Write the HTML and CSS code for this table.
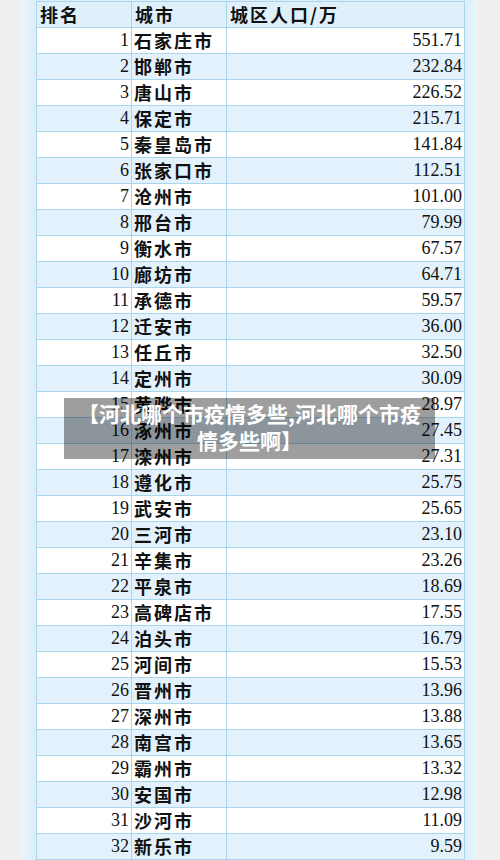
FILE: index.html
```html
<!DOCTYPE html>
<html lang="zh">
<head>
<meta charset="utf-8">
<link rel="stylesheet" href="styles.css">
</head>
<body>
<div class="page">
  <div class="band">
    <table class="pop">
      <colgroup><col class="c1"><col class="c2"><col class="c3"></colgroup>
      <thead>
        <tr><th>排名</th><th>城市</th><th>城区人口/万</th></tr>
      </thead>
      <tbody>
        <tr><td class="rank">1</td><td class="city">石家庄市</td><td class="num">551.71</td></tr>
        <tr><td class="rank">2</td><td class="city">邯郸市</td><td class="num">232.84</td></tr>
        <tr><td class="rank">3</td><td class="city">唐山市</td><td class="num">226.52</td></tr>
        <tr><td class="rank">4</td><td class="city">保定市</td><td class="num">215.71</td></tr>
        <tr><td class="rank">5</td><td class="city">秦皇岛市</td><td class="num">141.84</td></tr>
        <tr><td class="rank">6</td><td class="city">张家口市</td><td class="num">112.51</td></tr>
        <tr><td class="rank">7</td><td class="city">沧州市</td><td class="num">101.00</td></tr>
        <tr><td class="rank">8</td><td class="city">邢台市</td><td class="num">79.99</td></tr>
        <tr><td class="rank">9</td><td class="city">衡水市</td><td class="num">67.57</td></tr>
        <tr><td class="rank">10</td><td class="city">廊坊市</td><td class="num">64.71</td></tr>
        <tr><td class="rank">11</td><td class="city">承德市</td><td class="num">59.57</td></tr>
        <tr><td class="rank">12</td><td class="city">迁安市</td><td class="num">36.00</td></tr>
        <tr><td class="rank">13</td><td class="city">任丘市</td><td class="num">32.50</td></tr>
        <tr><td class="rank">14</td><td class="city">定州市</td><td class="num">30.09</td></tr>
        <tr><td class="rank">15</td><td class="city">黄骅市</td><td class="num">28.97</td></tr>
        <tr><td class="rank">16</td><td class="city">涿州市</td><td class="num">27.45</td></tr>
        <tr><td class="rank">17</td><td class="city">滦州市</td><td class="num">27.31</td></tr>
        <tr><td class="rank">18</td><td class="city">遵化市</td><td class="num">25.75</td></tr>
        <tr><td class="rank">19</td><td class="city">武安市</td><td class="num">25.65</td></tr>
        <tr><td class="rank">20</td><td class="city">三河市</td><td class="num">23.10</td></tr>
        <tr><td class="rank">21</td><td class="city">辛集市</td><td class="num">23.26</td></tr>
        <tr><td class="rank">22</td><td class="city">平泉市</td><td class="num">18.69</td></tr>
        <tr><td class="rank">23</td><td class="city">高碑店市</td><td class="num">17.55</td></tr>
        <tr><td class="rank">24</td><td class="city">泊头市</td><td class="num">16.79</td></tr>
        <tr><td class="rank">25</td><td class="city">河间市</td><td class="num">15.53</td></tr>
        <tr><td class="rank">26</td><td class="city">晋州市</td><td class="num">13.96</td></tr>
        <tr><td class="rank">27</td><td class="city">深州市</td><td class="num">13.88</td></tr>
        <tr><td class="rank">28</td><td class="city">南宫市</td><td class="num">13.65</td></tr>
        <tr><td class="rank">29</td><td class="city">霸州市</td><td class="num">13.32</td></tr>
        <tr><td class="rank">30</td><td class="city">安国市</td><td class="num">12.98</td></tr>
        <tr><td class="rank">31</td><td class="city">沙河市</td><td class="num">11.09</td></tr>
        <tr><td class="rank">32</td><td class="city">新乐市</td><td class="num">9.59</td></tr>
      </tbody>
    </table>
  </div>
  <div class="caption">【河北哪个市疫情多些,河北哪个市疫情多些啊】</div>
</div>
</body>
</html>
```
FILE: styles.css
```css
html, body {
  margin: 0;
  padding: 0;
}
body {
  background: #efefef;
  width: 500px;
  height: 860px;
  overflow: hidden;
}
.page {
  position: relative;
  width: 500px;
  height: 860px;
}
.band {
  margin: 0 22px;
  padding: 1px 14px 0 14px;
  background: linear-gradient(to right, #eaf5fc 0, #dcedf9 14px, #dcedf9 442px, #eaf5fc 456px);
  height: 859px;
}
.pop {
  border-collapse: collapse;
  table-layout: fixed;
  width: 428px;
  color: #111;
}
.c1 { width: 95px; }
.c2 { width: 95px; }
.c3 { width: 238px; }
.pop th, .pop td {
  border: 1px solid #a9d6ec;
  height: 25px;
  padding: 0 2px;
  line-height: 25px;
  white-space: nowrap;
  overflow: hidden;
}
.pop th {
  background: #dff0fb;
  text-align: left;
  font-family: "Noto Sans CJK SC", sans-serif;
  font-weight: 700;
  font-size: 18px;
  letter-spacing: 2px;
  padding-left: 3px;
}
.pop tbody tr:nth-child(odd) td { background: #ffffff; }
.pop tbody tr:nth-child(even) td { background: #e3f1fc; }
.rank, .num {
  text-align: right;
  font-family: "Liberation Serif", serif;
  font-size: 18px;
}
.rank { padding-right: 1px; }
.city {
  font-family: "Noto Sans CJK SC", sans-serif;
  font-weight: 700;
  font-size: 18px;
  letter-spacing: 2px;
  padding-left: 2px;
}
.caption {
  position: absolute;
  left: 64px;
  top: 398px;
  width: 371px;
  box-sizing: border-box;
  padding: 2px 12px 5px;
  background: rgba(0, 0, 0, 0.38);
  color: #fff;
  text-align: center;
  font-family: "Noto Sans CJK SC", sans-serif;
  font-weight: 700;
  font-size: 21px;
  line-height: 27px;
  text-spacing-trim: space-all;
}
```
